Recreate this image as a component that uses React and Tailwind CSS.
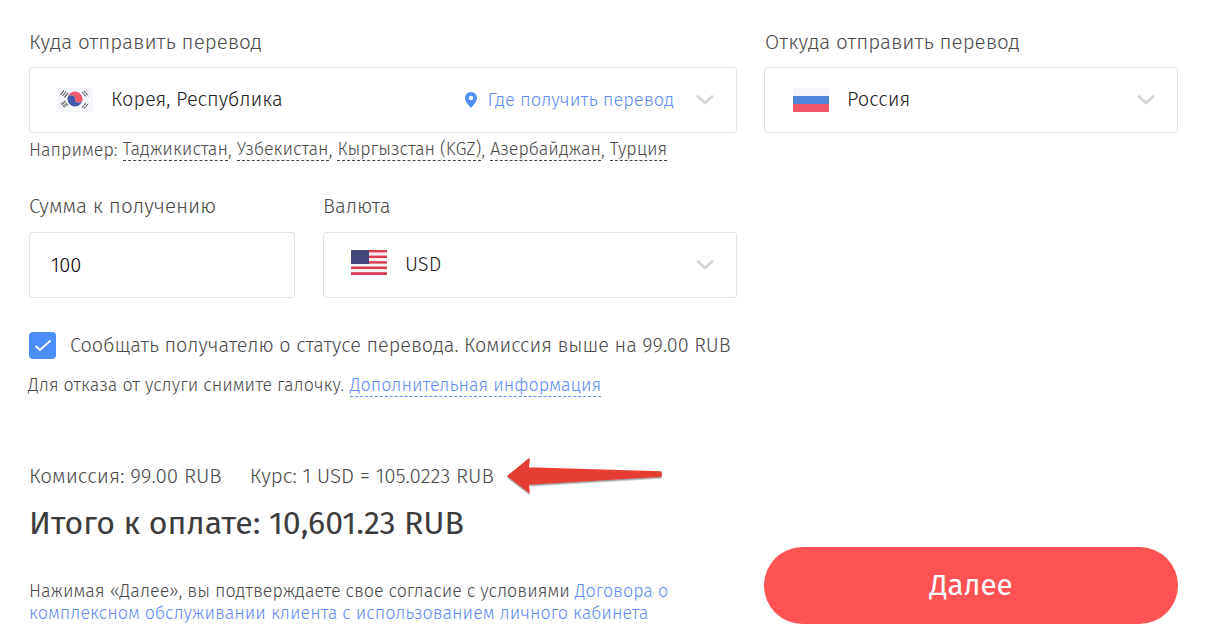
function Chevron() {
  return (
    <svg width="18" height="12" viewBox="0 0 18 12" className="shrink-0">
      <path d="M2 2.5 L9 9 L16 2.5" fill="none" stroke="#d6d6d6" strokeWidth="3" strokeLinecap="round" strokeLinejoin="round" />
    </svg>
  );
}

function KoreaFlag() {
  return (
    <svg width="36" height="24" viewBox="0 0 36 24" className="shrink-0">
      <rect width="36" height="24" fill="#f5f6fb" />
      <path d="M10.500 11 a7.500 7.500 0 0 1 15 0 a3.750 3.750 0 0 1 -7.500 0 a3.750 3.750 0 0 0 -7.500 0z" fill="#ef5a6a" />
      <path d="M10.500 11 a7.500 7.500 0 0 0 15 0 a3.750 3.750 0 0 1 -7.500 0 a3.750 3.750 0 0 0 -7.500 0z" fill="#3e5ba9" />
      <g stroke="#55555f" strokeWidth="1.100">
        <path d="M5.500 8 L9 3.500 M7.500 9.300 L11 4.800 M3.500 6.800 L7 2.300" />
        <path d="M25 4 L29.500 9 M27 3 L31.500 8" strokeDasharray="2.4 0.8" />
        <path d="M25 19.500 L29.500 14.500 M27 20.500 L31.500 15.500" strokeDasharray="2.4 0.8" />
        <path d="M5.500 14 L10 19 M4 15 L8.500 20 M7 13 L11.500 18" strokeDasharray="2.4 0.8" />
      </g>
    </svg>
  );
}

function RussiaFlag() {
  return (
    <div className="w-9 h-6 flex flex-col shrink-0 ml-px">
      <div className="flex-1 bg-[#f4f6fb]" />
      <div className="flex-1 bg-[#4f86dc]" />
      <div className="flex-1 bg-[#f0566a]" />
    </div>
  );
}

function UsFlag() {
  return (
    <svg width="36" height="25" viewBox="0 0 36 25" className="shrink-0 mb-[5px]">
      <rect width="36" height="25" fill="#f7f0f2" />
      <g fill="#dc3a50">
        <rect y="0" width="36" height="2.4" />
        <rect y="5.6" width="36" height="2.4" />
        <rect y="11.2" width="36" height="2.4" />
        <rect y="16.6" width="36" height="2.4" />
        <rect y="22.2" width="36" height="2.8" />
      </g>
      <rect width="18" height="14" fill="#46467f" />
    </svg>
  );
}

function Select({ flag, label, right, className }) {
  return (
    <div className={"h-[66px] border border-[#e2e2e2] rounded-[3px] bg-white flex items-center " + (className || "")}>
      <div className="ml-[27px] mr-[18px] flex items-center">{flag}</div>
      <span className="text-[20px] font-light text-[#222] mb-[2px]">{label}</span>
      <div className="ml-auto flex items-center">
        {right}
        <div className="ml-[22px] mr-[22px] flex"><Chevron /></div>
      </div>
    </div>
  );
}

function Ex({ children }) {
  return <span className="border-b border-dashed border-[#444] leading-[21px]">{children}</span>;
}

export default function App() {
  return (
    <div className="w-[1211px] h-[630px] overflow-hidden bg-white pl-[29px] pt-[29px] text-[#4a4a4a] font-light font-['Fira_Sans','Noto_Sans',sans-serif]">
      <div className="flex gap-[27px]">
        <div className="w-[708px]">
          <div className="text-[20.6px] leading-[26px] mb-[12px]">Куда отправить перевод</div>
          <Select
            flag={<KoreaFlag />}
            label="Корея, Республика"
            right={
              <div className="flex items-center gap-[11px] text-[#5f8cf5] text-[18.3px]">
                <svg width="12" height="16" viewBox="0 0 12 16">
                  <path fillRule="evenodd" d="M6 0 a6 6 0 0 1 6 6 c0 3.5-3.5 7-6 10 c-2.5-3-6-6.500-6-10 a6 6 0 0 1 6-6z M6 3.800 a2.200 2.200 0 1 0 0 4.400 a2.200 2.200 0 0 0 0-4.400z" fill="#4f8ff7" />
                </svg>
                <span className="mt-px">Где получить перевод</span>
              </div>
            }
          />
          <div className="mt-[6px] text-[17.9px] leading-[22px] flex">
            <span>Например:&nbsp;</span>
            <Ex>Таджикистан</Ex><span>,&nbsp;</span>
            <Ex>Узбекистан</Ex><span>,&nbsp;</span>
            <Ex>Кыргызстан (KGZ)</Ex><span>,&nbsp;</span>
            <Ex>Азербайджан</Ex><span>,&nbsp;</span>
            <Ex>Турция</Ex>
          </div>
        </div>
        <div className="w-[414px]">
          <div className="text-[20.6px] leading-[26px] mb-[12px] ml-px">Откуда отправить перевод</div>
          <Select flag={<RussiaFlag />} label="Россия" />
        </div>
      </div>

      <div className="flex gap-[28px] mt-[32px]">
        <div className="w-[266px]">
          <div className="text-[20.6px] leading-[26px] mb-[13px]">Сумма к получению</div>
          <div className="h-[66px] border border-[#e2e2e2] rounded-[3px] flex items-center pl-[21px] text-[20px] text-black">100</div>
        </div>
        <div className="w-[414px]">
          <div className="text-[20px] leading-[26px] mb-[13px]">Валюта</div>
          <Select flag={<UsFlag />} label="USD" />
        </div>
      </div>

      <div className="flex items-center mt-[34px] h-[27px]">
        <div className="w-[27px] h-[27px] rounded-[4px] bg-[#4c8ef7] flex items-center justify-center">
          <svg width="18" height="13" viewBox="0 0 18 13">
            <path d="M1.500 7 L6 11 L16.500 1.500" fill="none" stroke="white" strokeWidth="2" />
          </svg>
        </div>
        <span className="ml-[14px] text-[19.85px]">Сообщать получателю о статусе перевода. Комиссия выше на 99.00 RUB</span>
      </div>
      <div className="mt-[15px] text-[17.9px] leading-[22px] -ml-px flex">
        <span>Для отказа от услуги снимите галочку.&nbsp;</span>
        <span className="ml-px text-[#5f8cf5] border-b border-dashed border-[#5f8cf5]">Дополнительная информация</span>
      </div>

      <div className="flex mt-[66px]">
        <div className="w-[735px]">
          <div className="flex items-center text-[20.6px] leading-[26px]">
            <span>Комиссия: 99.00 RUB</span>
            <span className="ml-[28px]">Курс: 1 USD = 105.0223 RUB</span>
            <svg width="160" height="38" viewBox="0 0 160 38" className="ml-[12px] -my-[6px]">
              <defs>
                <filter id="s" x="-5%" y="-20%" width="110%" height="140%"><feDropShadow dx="0" dy="1.500" stdDeviation="0.700" floodColor="#555" floodOpacity="0.6" /></filter>
              </defs>
              <path d="M2 19 L23 2 L22 11 L155 15 L155 19 L22 27 L23 35 Z" fill="#e63d33" stroke="#e63d33" strokeWidth="1.500" strokeLinejoin="round" filter="url(#s)" />
            </svg>
          </div>
          <div className="mt-[14px] text-[32.1px] leading-[42px] font-normal text-[#3c3c3c]">Итого к оплате: 10,601.23 RUB</div>
          <div className="mt-[35px] text-[17.9px] leading-[22px]">
            <div>Нажимая «Далее», вы подтверждаете свое согласие с условиями <span className="text-[#5f8cf5]">Договора о</span></div>
            <div className="text-[#5f8cf5]">комплексном обслуживании клиента с использованием личного кабинета</div>
          </div>
        </div>
        <div className="self-end">
          <button className="block w-[414px] h-[77px] rounded-[39px] bg-[#ff5252] text-white text-[29.5px] font-normal">Далее</button>
        </div>
      </div>
    </div>
  );
}
